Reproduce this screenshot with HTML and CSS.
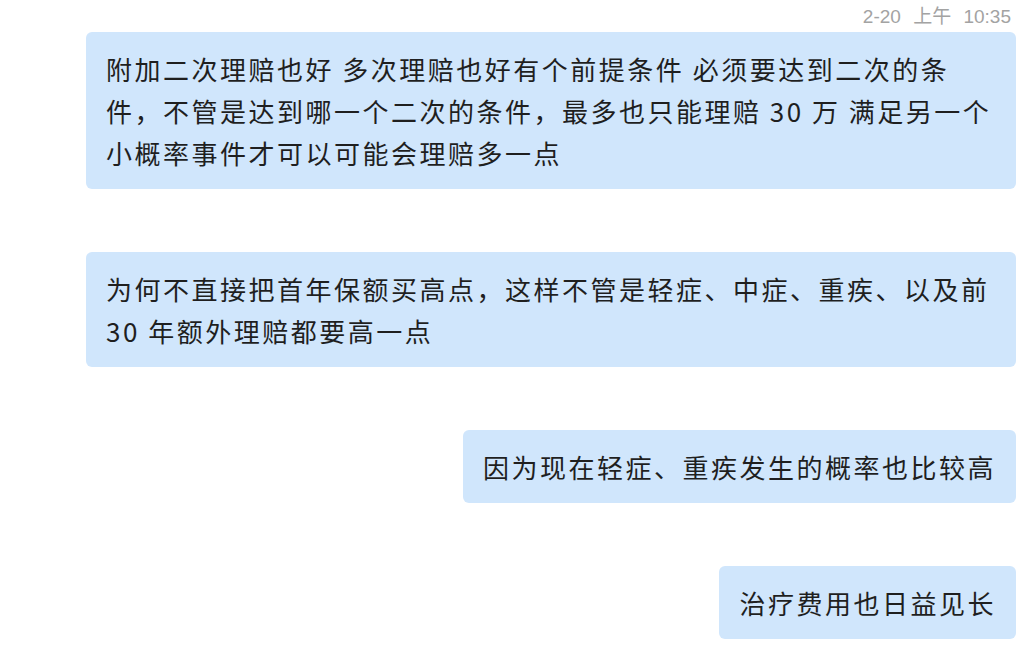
FILE: index.html
```html
<!DOCTYPE html>
<html lang="zh-CN">
<head>
    <meta charset="UTF-8">
    <meta name="viewport" content="width=device-width, initial-scale=1.0">
    <title>聊天记录</title>
    <link rel="stylesheet" href="styles.css">
</head>
<body>
    <div class="chat">
        <div class="time">2-20 上午 10:35</div>
        <div class="bubble">附加二次理赔也好 多次理赔也好有个前提条件 必须要达到二次的条件，不管是达到哪一个二次的条件，最多也只能理赔 30 万 满足另一个小概率事件才可以可能会理赔多一点</div>
        <div class="bubble">为何不直接把首年保额买高点，这样不管是轻症、中症、重疾、以及前30 年额外理赔都要高一点</div>
        <div class="bubble">因为现在轻症、重疾发生的概率也比较高</div>
        <div class="bubble">治疗费用也日益见长</div>
    </div>
</body>
</html>
```

FILE: styles.css
```css
body {
    margin: 0;
    background: #fff;
    font-family: "Noto Sans CJK SC", "Noto Sans", sans-serif;
    color: #1f1f1f;
}
.chat {
    display: flex;
    flex-direction: column;
    align-items: flex-end;
    gap: 63px;
    padding: 5px 14px 0;
}
.time {
    font-family: "Liberation Sans", "Noto Sans CJK SC", sans-serif;
    font-size: 19px;
    line-height: 24px;
    word-spacing: 7px;
    color: #a3a3a3;
    margin-right: 5px;
    margin-bottom: -60px;
}
.bubble {
    max-width: 890px;
    padding: 16px 20px 15px;
    background: #d0e6fc;
    border-radius: 6px;
    font-size: 26px;
    line-height: 42px;
    letter-spacing: 2.5px;
}
```
